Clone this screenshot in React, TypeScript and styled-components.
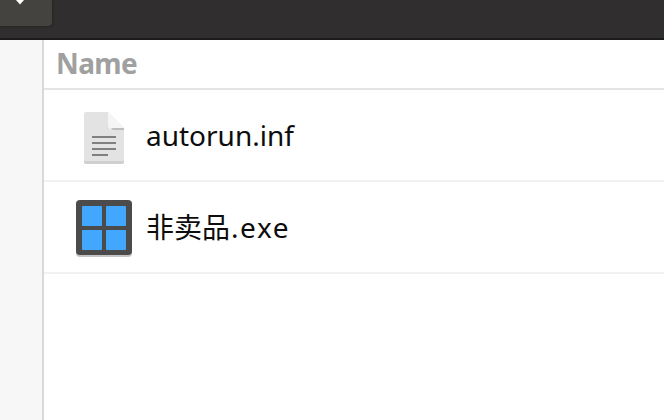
import React from "react";
import styled, { createGlobalStyle } from "styled-components";

const Global = createGlobalStyle`
  html, body { margin: 0; padding: 0; background: #fff; overflow: hidden; }
  #root { width: 664px; height: 420px; }
`;
const Page = styled.div`
  width: 664px; height: 420px; display: flex; flex-direction: column; overflow: hidden;
  font-family: "Noto Sans", "Noto Sans CJK SC", sans-serif;
`;
const TitleBar = styled.header`
  height: 38px; flex: none; background: #302e2e; border-bottom: 2px solid #1d1c1c;
  display: flex; align-items: flex-start;
`;
const MenuButton = styled.button`
  width: 52px; height: 26px; padding: 0; border: 0; border-radius: 0 0 4px 0;
  background: #454340; box-shadow: 1px 1px 2px #262525;
  display: flex; justify-content: center; align-items: flex-start; flex: none;
`;
const Chevron = styled.svg`width: 12px; height: 5px; display: block; margin-right: 13px;`;
const Body = styled.div`flex: 1; display: flex; min-height: 0;`;
const Sidebar = styled.aside`width: 42px; flex: none; background: #f7f7f7; border-right: 2px solid #d9d9d9;`;
const List = styled.main`flex: 1; display: flex; flex-direction: column; min-width: 0;`;
const ColumnHeader = styled.div`
  height: 50px; flex: none; box-sizing: border-box; border-bottom: 2px solid #e4e4e4; padding: 0 0 3px 12px;
  display: flex; align-items: center;
  font-size: 28px; font-weight: 700; color: #a0a0a0; letter-spacing: -0.6px;
`;
const Row = styled.div`
  height: 92px; flex: none; box-sizing: border-box; border-bottom: 2px solid #f1f1f1;
  display: flex; align-items: center;
`;
const IconSlot = styled.div<{ $top: number }>`
  width: 102px; height: 90px; flex: none; box-sizing: border-box;
  padding: ${(p) => p.$top}px 0 0 18px;
  display: flex; justify-content: center; align-items: flex-start;
`;
const FileName = styled.span`font-size: 28px; color: #0d0d0d; line-height: 34px; white-space: nowrap;`;
const Extension = styled.span`letter-spacing: 1.6px; margin-left: 1px;`;
const IconArt = styled.svg`display: block; flex: none;`;

const DocIcon = () => (
  <IconArt width="40" height="52" viewBox="0 0 40 52">
    <path d="M2 0h22l16 16v34a2 2 0 0 1-2 2H2a2 2 0 0 1-2-2V2a2 2 0 0 1 2-2z" fill="#e3e3e3"/>
    <path d="M0 49h40v1a2 2 0 0 1-2 2H2a2 2 0 0 1-2-2z" fill="#cfcfcf"/>
    <path d="M24 0l16 16v2H29a5 5 0 0 1-5-5z" fill="#f5f5f5"/>
    <path d="M27 16h13v2H30a3 3 0 0 1-3-2z" fill="#bdbdbd"/>
    <path d="M8 24h24v2H8zM8 30h24v2H8zM8 36h24v2H8zM8 42h16v2H8z" fill="#808080"/>
  </IconArt>
);
const WinIcon = () => (
  <IconArt width="56" height="57" viewBox="0 0 56 57">
    <rect x="0" y="1" width="56" height="56" rx="4" fill="#c4c4c4"/>
    <rect x="0" y="0" width="56" height="55" rx="4" fill="#4b4b4b"/>
    <rect x="6" y="6" width="20" height="20" rx="1" fill="#42a7fe"/>
    <rect x="30" y="6" width="20" height="20" rx="1" fill="#42a7fe"/>
    <rect x="6" y="30" width="20" height="20" rx="1" fill="#42a7fe"/>
    <rect x="30" y="30" width="20" height="20" rx="1" fill="#42a7fe"/>
  </IconArt>
);

export default function App() {
  return (
    <Page>
      <Global />
      <TitleBar>
        <MenuButton aria-label="menu">
          <Chevron viewBox="0 0 12 5"><path d="M2 0h8L6 4.5z" fill="#fff"/></Chevron>
        </MenuButton>
      </TitleBar>
      <Body>
        <Sidebar />
        <List>
          <ColumnHeader>Name</ColumnHeader>
          <Row>
            <IconSlot $top={22}><DocIcon /></IconSlot>
            <FileName>autorun.inf</FileName>
          </Row>
          <Row>
            <IconSlot $top={18}><WinIcon /></IconSlot>
            <FileName>非卖品<Extension>.exe</Extension></FileName>
          </Row>
        </List>
      </Body>
    </Page>
  );
}
